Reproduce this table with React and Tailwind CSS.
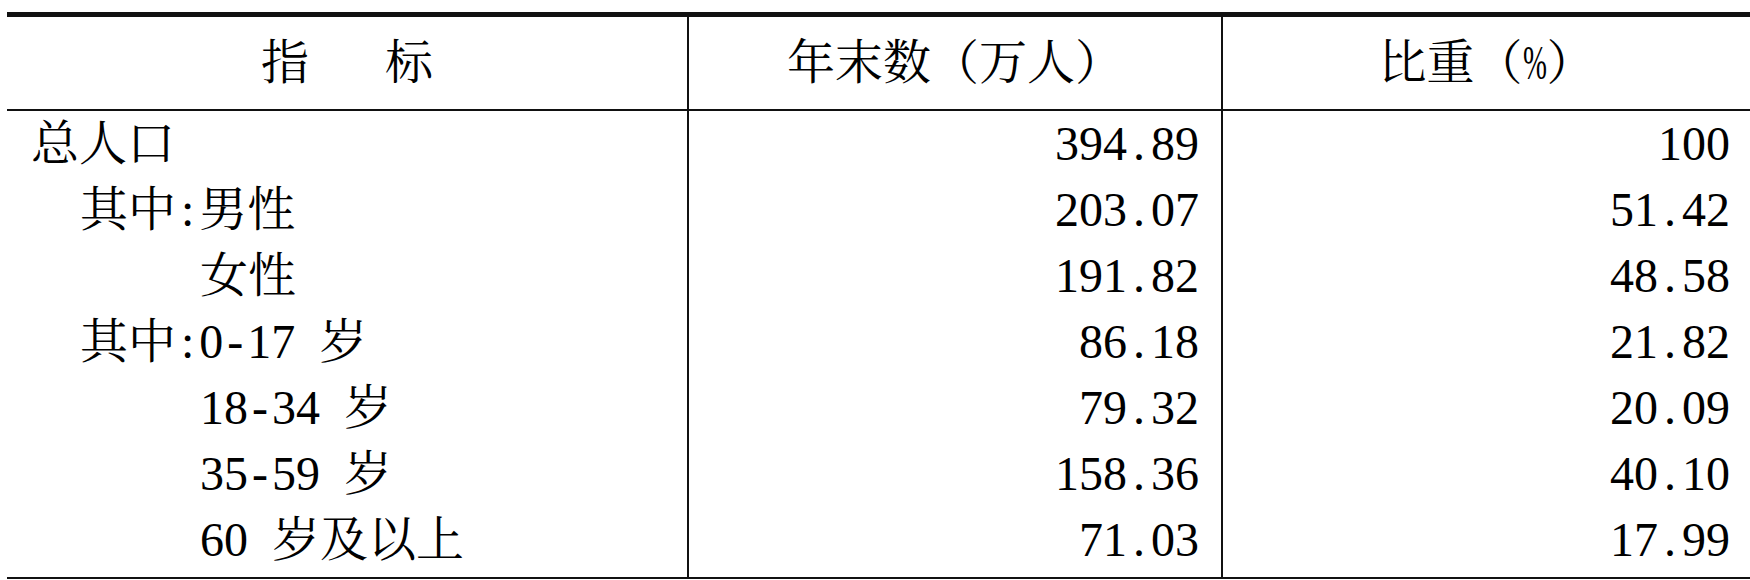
import React from "react";

const rows = [
  { label: "总人口", level: 0, count: "394.89", share: "100" },
  { label: "其中:男性", level: 1, count: "203.07", share: "51.42" },
  { label: "女性", level: 2, count: "191.82", share: "48.58" },
  { label: "其中:0-17 岁", level: 1, count: "86.18", share: "21.82" },
  { label: "18-34 岁", level: 2, count: "79.32", share: "20.09" },
  { label: "35-59 岁", level: 2, count: "158.36", share: "40.10" },
  { label: "60 岁及以上", level: 2, count: "71.03", share: "17.99" },
];

const indent = ["pl-[24px]", "pl-[73px]", "pl-[193px]"];

const pad = {
  ".": "mx-[6px]",
  ":": "mx-[5px]",
  "-": "mx-[4px]",
  " ": "mr-[12px]",
};

const Mixed = ({ text }) => {
  const parts = [];
  let run = "";
  text.split("").forEach((ch, i) => {
    if (pad[ch]) {
      if (run) parts.push(run);
      run = "";
      parts.push(
        <span key={i} className={pad[ch]}>
          {ch === " " ? "\u00a0" : ch}
        </span>
      );
    } else {
      run += ch;
    }
  });
  if (run) parts.push(run);
  return <span>{parts}</span>;
};

const App = () => {
  return (
    <div className="w-[1750px] h-[580px] bg-white text-black overflow-hidden">
      <div className="ml-[7px] mt-[12px] border-t-[5px] border-b-2 border-[#111] text-[48px] font-['Liberation_Serif','Noto_Serif_CJK_SC',serif]">
        {/* Header */}
        <div className="grid grid-cols-[682px_534px_1fr] border-b-2 border-[#111]">
          <div className="h-[92px] flex items-center justify-center gap-[76px] border-r-2 border-[#111]">
            <span>指</span>
            <span>标</span>
          </div>
          <div className="h-[92px] flex items-center justify-center border-r-2 border-[#111]">
            年末数（万人）
          </div>
          <div className="h-[92px] flex items-center justify-center">
            比重（<span className="inline-block -mx-[8px] scale-x-60">%</span>）
          </div>
        </div>

        {/* Body */}
        <div className="grid grid-cols-[682px_534px_1fr]">
          {rows.map((row, index) => {
            const h = index === rows.length - 1 ? "h-[70px] pb-[4px]" : "h-[66px]";
            return (
              <React.Fragment key={index}>
                <div className={`${h} flex items-center border-r-2 border-[#111] ${indent[row.level]}`}>
                  <Mixed text={row.label} />
                </div>
                <div className={`${h} flex items-center justify-end pr-[22px] border-r-2 border-[#111]`}>
                  <Mixed text={row.count} />
                </div>
                <div className={`${h} flex items-center justify-end pr-[20px]`}>
                  <Mixed text={row.share} />
                </div>
              </React.Fragment>
            );
          })}
        </div>
      </div>
    </div>
  );
};

export default App;
